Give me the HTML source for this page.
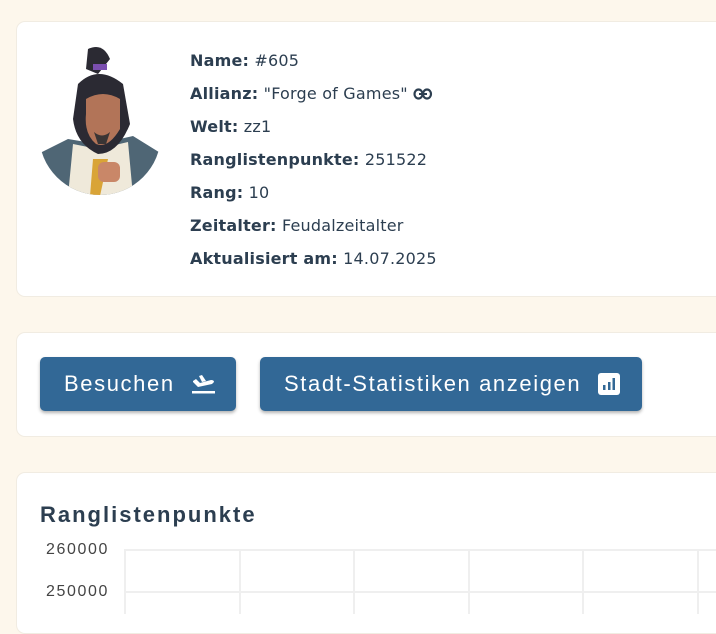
<!DOCTYPE html>
<html><head><style>
body{margin:0;width:716px;height:614px;overflow:hidden;background:#fdf7ec;font-family:"Liberation Sans",sans-serif;color:#2c3e50;position:relative}
.card{position:absolute;left:16px;right:-10px;background:#fff;border:1px solid #f1ece2;border-radius:9px}
.info{position:absolute;left:190px;top:44px;font-family:"DejaVu Sans",sans-serif;font-size:16px;line-height:33px;letter-spacing:0.2px;white-space:nowrap}
.info b{font-weight:bold}
.btn{position:absolute;top:357px;height:54px;background:#326896;color:#fff;border-radius:5px;box-shadow:0 2px 3px rgba(0,0,0,.3);font-size:22px;line-height:54px;box-sizing:border-box;padding-left:24px;letter-spacing:1.6px}
.lbl{position:absolute;left:46px;font-size:16px;color:#444;letter-spacing:1.6px}
.h{position:absolute;left:124px;right:0;height:2px;background:#efefef}
.v{position:absolute;top:549px;bottom:0;width:2px;background:#efefef}
</style></head><body>
<div class="card" style="top:21px;height:274px"></div>
<svg style="position:absolute;left:38px;top:44px" width="124" height="152" viewBox="0 0 124 152">
<defs><clipPath id="c"><circle cx="62" cy="90" r="61"/></clipPath></defs>
<g clip-path="url(#c)">
<rect x="0" y="0" width="124" height="152" fill="#fff"/>
<path d="M0 110 L30 95 L60 100 L95 92 L124 110 L124 152 L0 152Z" fill="#4f6675"/>
<path d="M35 100 L60 105 L90 98 L95 152 L30 152Z" fill="#efe9da"/>
<path d="M55 115 L70 115 L62 152 L52 152Z" fill="#d9a437"/>
<rect x="60" y="118" width="22" height="20" rx="6" fill="#c98768"/>
</g>
<path d="M40 40 Q60 20 85 40 L92 80 Q80 110 60 110 Q38 100 35 75Z" fill="#2b2a33"/>
<path d="M48 55 Q65 45 82 55 L82 85 Q70 105 58 100 Q46 90 48 70Z" fill="#b27458"/>
<path d="M50 5 Q65 -2 72 15 L60 30 L48 25Z" fill="#2b2a33"/>
<rect x="55" y="20" width="14" height="6" fill="#7b4fb0"/>
<path d="M56 88 Q64 95 72 88 L68 100 L60 100Z" fill="#3a3535"/>
</svg>
<div class="info">
<div><b>Name:</b> #605</div>
<div><b>Allianz:</b> "Forge of Games" <svg width="20" height="12" viewBox="0 0 20 12" style="vertical-align:-1px"><rect x="1.5" y="1.5" width="8" height="9" rx="4.5" fill="none" stroke="#2c3e50" stroke-width="2.2"/><rect x="10" y="1.5" width="8" height="9" rx="4.5" fill="none" stroke="#2c3e50" stroke-width="2.2"/><rect x="6" y="5" width="8" height="2" fill="#2c3e50"/></svg></div>
<div><b>Welt:</b> zz1</div>
<div><b>Ranglistenpunkte:</b> 251522</div>
<div><b>Rang:</b> 10</div>
<div><b>Zeitalter:</b> Feudalzeitalter</div>
<div><b>Aktualisiert am:</b> 14.07.2025</div>
</div>
<div class="card" style="top:332px;height:103px"></div>
<div class="btn" style="left:40px;width:196px">Besuchen <svg width="26" height="22" viewBox="0 0 26 22" style="position:absolute;left:150px;top:16px"><path d="M3 8 L6 6 L10 10 L21 7 Q24 7 24 9 L22 11 L8 14 L3 9Z M9 3 L12 2 L16 8 L12 9Z" fill="#fff"/><rect x="2" y="18" width="23" height="2.5" fill="#fff"/></svg></div>
<div class="btn" style="left:260px;width:382px">Stadt-Statistiken anzeigen <svg width="22" height="22" viewBox="0 0 22 22" style="position:absolute;left:338px;top:16px"><rect x="0" y="0" width="22" height="22" rx="3" fill="#fff"/><rect x="5" y="12" width="2.5" height="5" fill="#326896"/><rect x="10" y="9" width="2.5" height="8" fill="#326896"/><rect x="14.5" y="5" width="2.5" height="12" fill="#326896"/></svg></div>
<div class="card" style="top:472px;height:160px"></div>
<div style="position:absolute;left:40px;top:502px;font-size:22px;font-weight:bold;letter-spacing:2px">Ranglistenpunkte</div>
<div class="lbl" style="top:541px">260000</div>
<div class="lbl" style="top:583px">250000</div>
<div class="h" style="top:549px"></div>
<div class="h" style="top:591px"></div>
<div class="v" style="left:124px"></div><div class="v" style="left:239px"></div><div class="v" style="left:353px"></div><div class="v" style="left:468px"></div><div class="v" style="left:582px"></div><div class="v" style="left:697px"></div>
</body></html>
